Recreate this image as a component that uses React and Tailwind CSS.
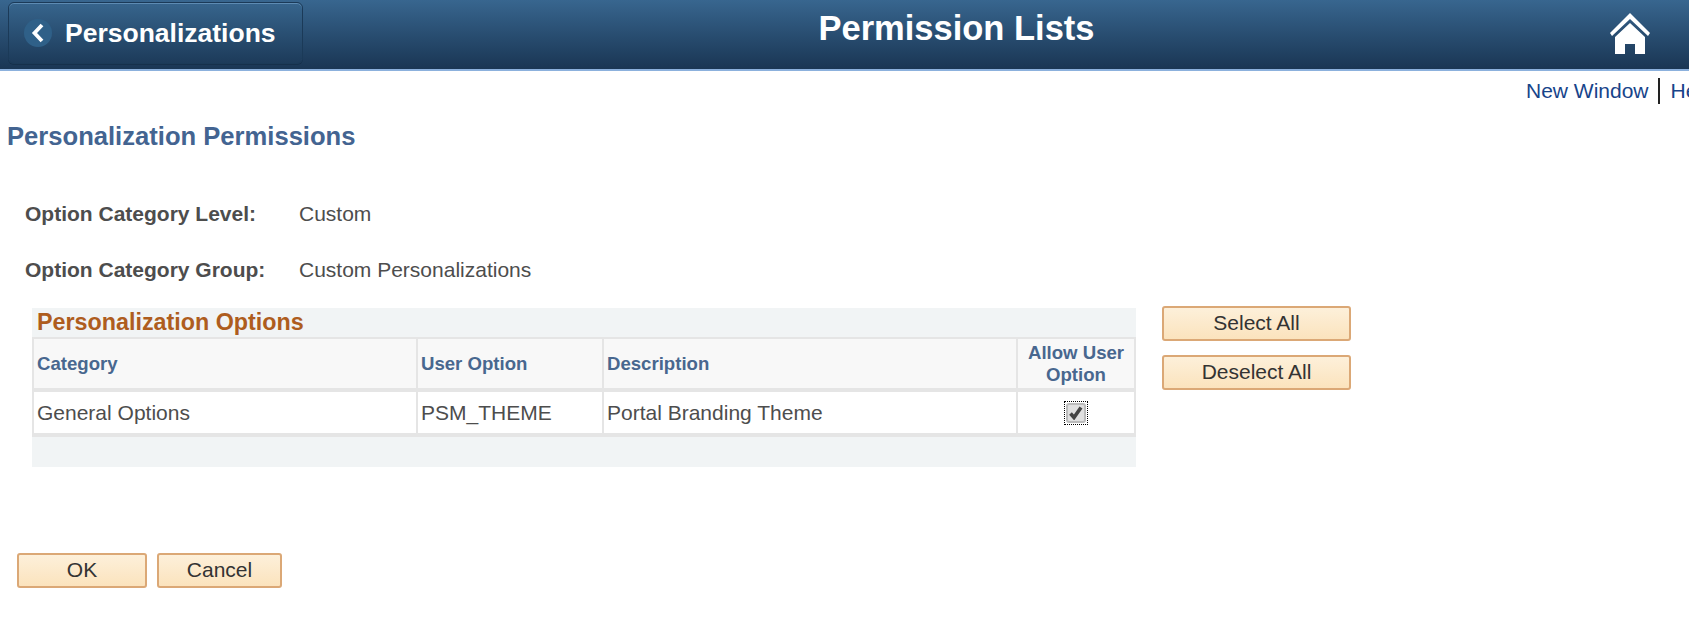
const OrangeButton = ({ label, className }) => (
  <button className={`h-[35px] rounded-[3px] border-2 border-[#dba876] bg-gradient-to-b from-[#fdf0da] to-[#fbe3bd] pb-[2px] text-[21px] leading-none text-[#333] ${className}`}>
    {label}
  </button>
);

const App = () => {
  return (
    <div className="h-[627px] w-[1689px] overflow-hidden bg-white font-['Liberation_Sans',Arial,sans-serif] text-[#4d4d4d]">
      {/* Banner */}
      <div className="flex h-[71px] items-start border-b-2 border-[#8cb1dd] bg-gradient-to-b from-[#38668f] to-[#1a3654] pr-[39px] pl-2">
        <button className="mt-[2px] flex h-[62px] w-[295px] items-center rounded-[6px] border border-[#1b3a58] bg-gradient-to-b from-[#37658d] to-[#1d3b5a] pl-[15px] shadow-[inset_0_1px_0_#5d8bb3,0_1px_0_#16304b]">
          <span className="flex h-7 w-7 items-center justify-center rounded-full bg-[#2f6088]">
            <svg width="16" height="20" viewBox="0 0 16 20">
              <path d="M12 2 L4.5 10 L12 18" fill="none" stroke="#fff" strokeWidth="3.8" />
            </svg>
          </span>
          <span className="ml-[13px] text-[26.5px] leading-none font-bold text-white">Personalizations</span>
        </button>
        <div className="mt-[9px] flex-1 text-center text-[34.5px] leading-[38px] font-bold text-white">Permission Lists</div>
        <svg className="mt-[13px]" width="40" height="41" viewBox="0 0 40 41">
          <path d="M20 0 L40 20 L38 23 L20 6 L2 23 L0 20 Z" fill="#fff" />
          <path d="M20 10 L35 24 L35 41 L25 41 L25 31 L15 31 L15 41 L5 41 L5 24 Z" fill="#fff" />
        </svg>
      </div>

      {/* Top links */}
      <div className="flex h-[39px] items-center pl-[1526px] text-[21px] whitespace-nowrap text-[#17448a]">
        <span>New Window</span>
        <span className="mr-[11px] ml-[9px] h-[26px] w-[2px] shrink-0 bg-[#222]" />
        <span>Help</span>
      </div>

      <h1 className="mt-[12px] pl-[7px] text-[25.6px] leading-[28px] font-bold text-[#436491]">Personalization Permissions</h1>

      <div className="mt-[53px] flex items-center pl-[25px] text-[21px] leading-[22px]">
        <span className="w-[274px] font-bold">Option Category Level:</span>
        <span>Custom</span>
      </div>
      <div className="mt-[34px] flex items-center pl-[25px] text-[21px] leading-[22px]">
        <span className="w-[274px] font-bold">Option Category Group:</span>
        <span>Custom Personalizations</span>
      </div>

      <div className="mt-[27px] flex items-start pl-[32px]">
        {/* Options grid */}
        <div className="w-[1104px] bg-[#f1f4f5]">
          <div className="h-[29px] pl-[5px] text-[23.3px] leading-[28px] font-bold text-[#ae5d1e]">Personalization Options</div>
          <div className="grid grid-cols-[382px_184px_412px_116px] gap-x-[2px] border-x-2 border-t-2 border-b-4 border-[#e5e5e5] bg-[#e5e5e5]">
            <div className="flex h-[49px] items-center bg-[#f8f8f8] pl-[3px] text-[18.6px] font-bold text-[#48678f]">Category</div>
            <div className="flex h-[49px] items-center bg-[#f8f8f8] pl-[3px] text-[18.6px] font-bold text-[#48678f]">User Option</div>
            <div className="flex h-[49px] items-center bg-[#f8f8f8] pl-[3px] text-[18.6px] font-bold text-[#48678f]">Description</div>
            <div className="flex h-[49px] items-center justify-center bg-[#f8f8f8] text-center text-[18.6px] leading-[22px] font-bold text-[#48678f]">Allow User<br />Option</div>
            <div className="col-span-4 h-1" />
            <div className="flex h-[41px] items-center bg-white pl-[3px] text-[21px]">General Options</div>
            <div className="flex h-[41px] items-center bg-white pl-[3px] text-[21px]">PSM_THEME</div>
            <div className="flex h-[41px] items-center bg-white pl-[3px] text-[21px]">Portal Branding Theme</div>
            <div className="flex h-[41px] items-center justify-center bg-white">
              <div className="flex h-6 w-6 items-center justify-center border border-dotted border-black">
                <div className="flex h-5 w-5 items-center justify-center rounded-[3px] border-2 border-[#bbb] bg-[#e0e0e0]">
                  <svg width="14" height="14" viewBox="0 0 14 14">
                    <path d="M1.5 7.5 L5 11.5 L12 1.5" fill="none" stroke="#444" strokeWidth="3.6" />
                  </svg>
                </div>
              </div>
            </div>
          </div>
          <div className="h-[30px]" />
        </div>

        <div className="-mt-[2px] ml-[26px] flex w-[189px] flex-col gap-[14px]">
          <OrangeButton label="Select All" className="w-full" />
          <OrangeButton label="Deselect All" className="w-full" />
        </div>
      </div>

      <div className="mt-[86px] flex gap-[10px] pl-[17px]">
        <OrangeButton label="OK" className="w-[130px]" />
        <OrangeButton label="Cancel" className="w-[125px]" />
      </div>
    </div>
  );
};

export default App;
